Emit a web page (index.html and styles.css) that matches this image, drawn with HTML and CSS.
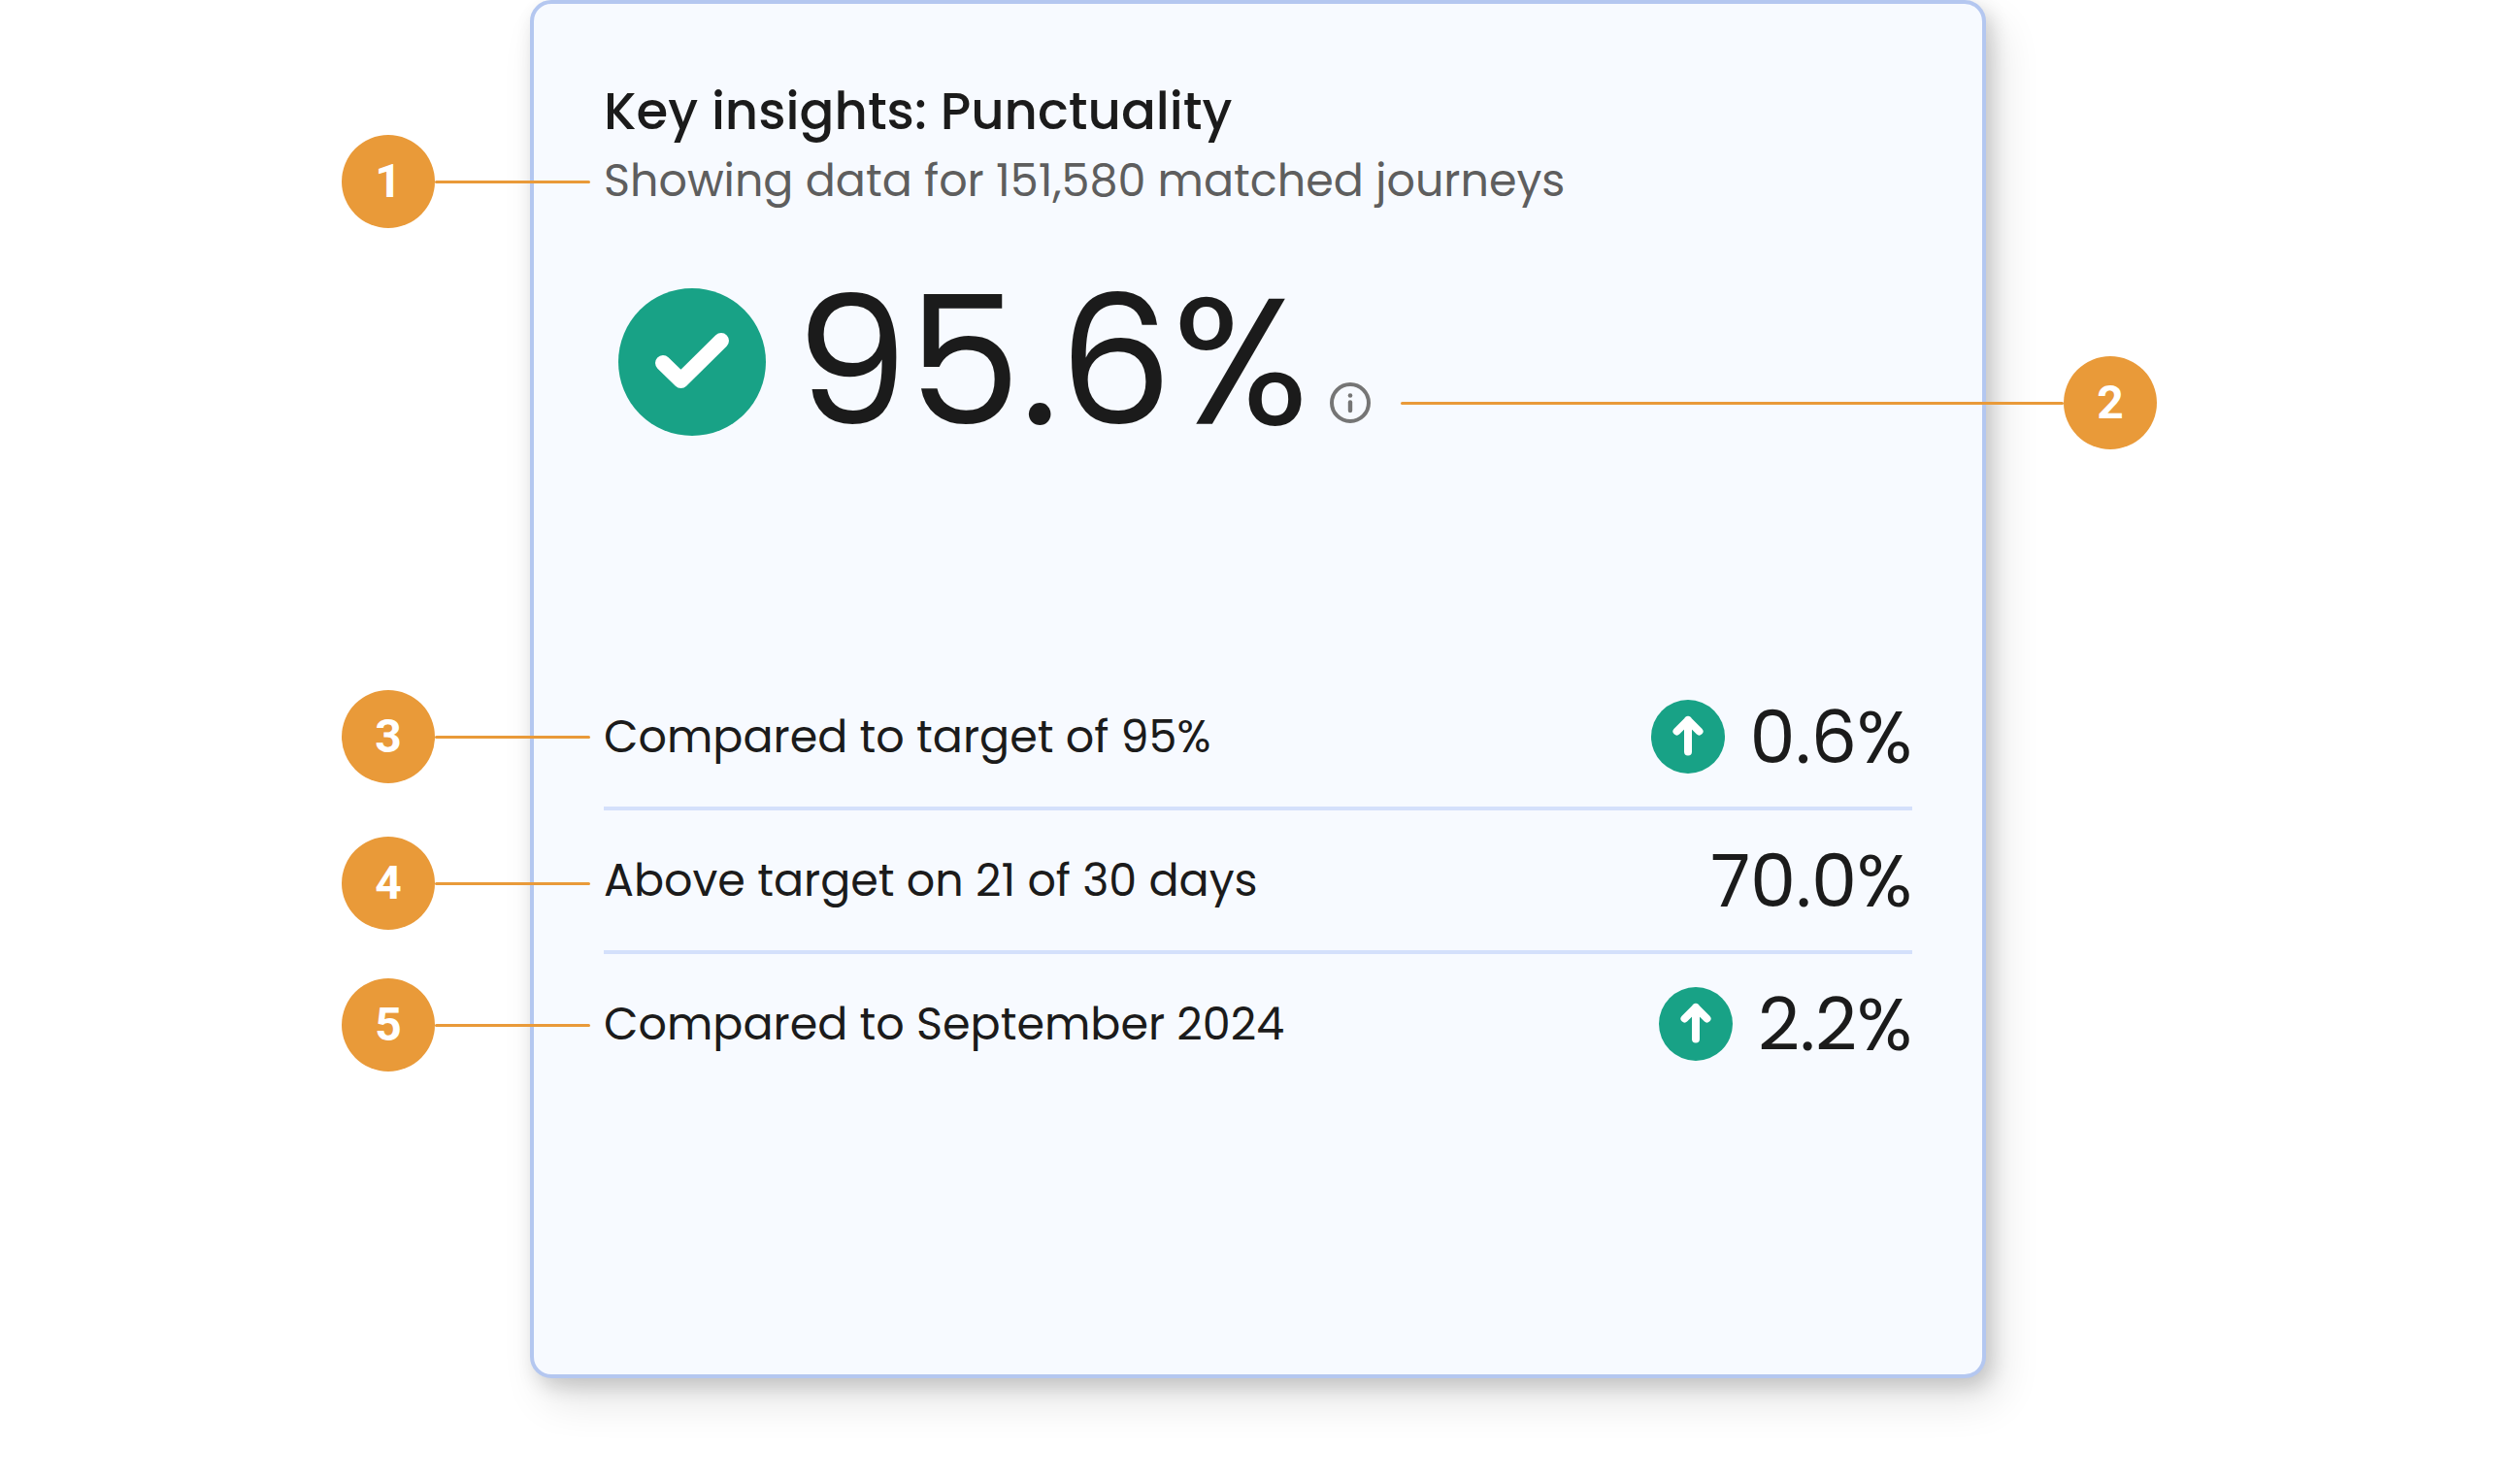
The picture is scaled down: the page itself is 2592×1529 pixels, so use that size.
FILE: index.html
```html
<!DOCTYPE html>
<html lang="en">
<head>
  <meta charset="UTF-8">
  <title>Key insights: Punctuality</title>
  <link rel="stylesheet" href="styles.css">
</head>
<body>
  <main class="card">
    <h1 class="title">Key insights: Punctuality</h1>
    <p class="subtitle">Showing data for 151,580 matched journeys</p>

    <div class="score">
      <svg class="score-icon" viewBox="0 0 152 152" aria-hidden="true">
        <circle cx="76" cy="76" r="76" fill="#18a286"/>
        <path d="M46 77L64.5 95L106 54" fill="none" stroke="#fff" stroke-width="16" stroke-linecap="round" stroke-linejoin="round"/>
      </svg>
      <span class="score-value">95.6%</span>
      <button class="info" type="button" aria-label="More information">
        <svg viewBox="0 0 42 42" aria-hidden="true">
          <circle cx="21" cy="21" r="19" fill="none" stroke="#757575" stroke-width="4"/>
          <circle cx="21" cy="13.5" r="2.3" fill="#757575"/>
          <path d="M21 20.5V29" stroke="#757575" stroke-width="4.4" stroke-linecap="round"/>
        </svg>
      </button>
    </div>

    <dl class="stats">
      <div class="row">
        <dt>Compared to target of 95%</dt>
        <dd>
          <svg class="arrow" viewBox="0 0 76 76" aria-hidden="true">
            <circle cx="38" cy="38" r="38" fill="#18a286"/>
            <path d="M38 53.5V21M26.5 32.5L38 21L49.5 32.5" fill="none" stroke="#fff" stroke-width="8" stroke-linecap="round" stroke-linejoin="round"/>
          </svg>
          0.6%
        </dd>
      </div>
      <div class="row">
        <dt>Above target on 21 of 30 days</dt>
        <dd>70.0%</dd>
      </div>
      <div class="row">
        <dt>Compared to September 2024</dt>
        <dd>
          <svg class="arrow" viewBox="0 0 76 76" aria-hidden="true">
            <circle cx="38" cy="38" r="38" fill="#18a286"/>
            <path d="M38 53.5V21M26.5 32.5L38 21L49.5 32.5" fill="none" stroke="#fff" stroke-width="8" stroke-linecap="round" stroke-linejoin="round"/>
          </svg>
          2.2%
        </dd>
      </div>
    </dl>

    <!-- numbered callouts pinned over the card -->
    <div class="pin pin-1"><span>1</span></div>
    <div class="pin pin-right pin-2"><span>2</span></div>
    <div class="pin pin-3"><span>3</span></div>
    <div class="pin pin-4"><span>4</span></div>
    <div class="pin pin-5"><span>5</span></div>
  </main>
</body>
</html>
```

FILE: styles.css
```css
* {
  box-sizing: border-box;
}
body {
  margin: 0;
  min-height: 100vh;
  background: #fff;
  color: #1b1b1b;
  font-family: Poppins, Inter, sans-serif;
}
.card {
  position: relative;
  max-width: 1500px;
  margin: 0 auto;
  padding: 76px 72px 289px;
  background: #f7faff;
  border: 4px solid #b4c7f0;
  border-radius: 22px;
  box-shadow: 14px 24px 44px rgba(0, 0, 0, 0.11), 6px 8px 20px rgba(0, 0, 0, 0.16);
}
.title {
  margin: 0;
  font-size: 53px;
  font-weight: 500;
  line-height: 70px;
}
.subtitle {
  margin: 0;
  color: #5e5e5e;
  font-size: 46px;
  line-height: 72px;
}
.score {
  display: flex;
  align-items: center;
  margin-top: 75px;
  padding-left: 15px;
}
.score-icon {
  width: 152px;
  height: 152px;
  margin-right: 30px;
}
.score-value {
  font-size: 185px;
  line-height: 152px;
}
.info {
  align-self: flex-end;
  margin: 0 0 13px 22px;
  padding: 0;
  border: none;
  background: none;
}
.info svg {
  display: block;
  width: 42px;
  height: 42px;
}
.stats {
  margin: 238px 0 0;
}
.row {
  display: flex;
  justify-content: space-between;
  align-items: center;
  height: 144px;
  font-size: 46px;
}
.row + .row {
  height: 148px;
  border-top: 4px solid #d4e0fb;
}
.row dd {
  display: flex;
  align-items: center;
  gap: 26px;
  margin: 0;
  font-size: 75px;
}
.arrow {
  width: 76px;
  height: 76px;
}

.pin {
  position: absolute;
  left: -198px;
  display: flex;
  align-items: center;
  width: 256px;
  color: #fff;
  font-family: Roboto, sans-serif;
  font-size: 48px;
  font-weight: 700;
}
.pin span {
  width: 96px;
  border-radius: 50%;
  background: #e99a39;
  line-height: 96px;
  text-align: center;
}
.pin::after {
  content: "";
  flex: 1;
  height: 3px;
  border-radius: 2px;
  background: #e99a39;
}
.pin-right {
  left: auto;
  right: -180px;
  flex-direction: row-reverse;
  width: 779px;
}
.pin-1 {
  top: 135px;
}
.pin-2 {
  top: 363px;
}
.pin-3 {
  top: 707px;
}
.pin-4 {
  top: 858px;
}
.pin-5 {
  top: 1004px;
}
```
